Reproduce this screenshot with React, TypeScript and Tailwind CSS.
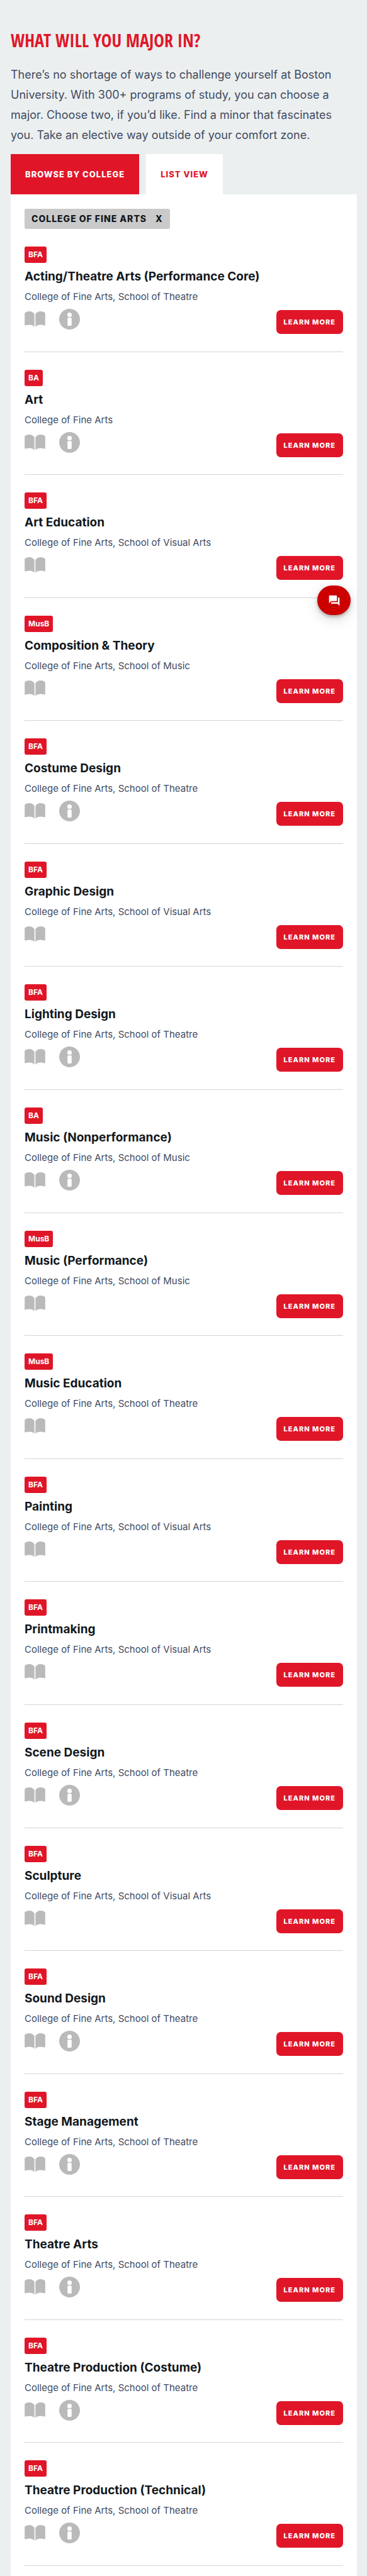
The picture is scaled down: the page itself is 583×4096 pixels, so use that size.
import { MdQuestionAnswer } from 'react-icons/md'

interface Program {
  degree: string
  name: string
  school: string
  info?: boolean
}

const programs: Program[] = [
  { degree: 'BFA', name: 'Acting/Theatre Arts (Performance Core)', school: 'College of Fine Arts, School of Theatre', info: true },
  { degree: 'BA', name: 'Art', school: 'College of Fine Arts', info: true },
  { degree: 'BFA', name: 'Art Education', school: 'College of Fine Arts, School of Visual Arts' },
  { degree: 'MusB', name: 'Composition & Theory', school: 'College of Fine Arts, School of Music' },
  { degree: 'BFA', name: 'Costume Design', school: 'College of Fine Arts, School of Theatre', info: true },
  { degree: 'BFA', name: 'Graphic Design', school: 'College of Fine Arts, School of Visual Arts' },
  { degree: 'BFA', name: 'Lighting Design', school: 'College of Fine Arts, School of Theatre', info: true },
  { degree: 'BA', name: 'Music (Nonperformance)', school: 'College of Fine Arts, School of Music', info: true },
  { degree: 'MusB', name: 'Music (Performance)', school: 'College of Fine Arts, School of Music' },
  { degree: 'MusB', name: 'Music Education', school: 'College of Fine Arts, School of Theatre' },
  { degree: 'BFA', name: 'Painting', school: 'College of Fine Arts, School of Visual Arts' },
  { degree: 'BFA', name: 'Printmaking', school: 'College of Fine Arts, School of Visual Arts' },
  { degree: 'BFA', name: 'Scene Design', school: 'College of Fine Arts, School of Theatre', info: true },
  { degree: 'BFA', name: 'Sculpture', school: 'College of Fine Arts, School of Visual Arts' },
  { degree: 'BFA', name: 'Sound Design', school: 'College of Fine Arts, School of Theatre', info: true },
  { degree: 'BFA', name: 'Stage Management', school: 'College of Fine Arts, School of Theatre', info: true },
  { degree: 'BFA', name: 'Theatre Arts', school: 'College of Fine Arts, School of Theatre', info: true },
  { degree: 'BFA', name: 'Theatre Production (Costume)', school: 'College of Fine Arts, School of Theatre', info: true },
  { degree: 'BFA', name: 'Theatre Production (Technical)', school: 'College of Fine Arts, School of Theatre', info: true },
]

function BookIcon() {
  return (
    <svg viewBox="0 0 60 46" className="w-[33px] h-[25px] fill-[#bababa]" aria-label="Major" role="img">
      <path d="M28.5 8C25 3 20 0 14 0 8.500 0 4 1.500 1 4Q0 5 0 6V40.500Q0 42 2 41.500C6 40 10 39.500 14 39.500 20 39.500 25 41.500 28.500 45.500Z" />
      <path d="M31.500 8C35 3 40 0 46 0 51.500 0 56 1.500 59 4Q60 5 60 6V40.500Q60 42 58 41.500C54 40 50 39.500 46 39.500 40 39.500 35 41.500 31.500 45.500Z" />
    </svg>
  )
}

function InfoIcon() {
  return (
    <svg viewBox="0 0 60 60" className="size-[33px]" aria-label="More information" role="img">
      <circle cx="30" cy="30" r="30" fill="#bababa" />
      <circle cx="30" cy="17.500" r="6.500" fill="#fff" />
      <rect x="24" y="26" width="12" height="23" rx="2" fill="#fff" />
    </svg>
  )
}

function ProgramRow({ program }: { program: Program }) {
  return (
    <li className="flex-1 border-b border-[#d5d5d5] pt-7">
      <span className="inline-flex items-center h-[26px] px-[6px] rounded-[3px] bg-[#e01628] text-white text-[12px] leading-4 font-bold align-top">
        {program.degree}
      </span>
      <h2 className="mt-[9px] text-[19px] leading-[26px] font-bold text-[#12181d]">{program.name}</h2>
      <p className="mt-2 text-[15px] leading-[22px] text-[#414b5f]">{program.school}</p>
      <div className="mt-2 flex items-start justify-between">
        <div className="flex items-center gap-[22px] h-[33px]">
          <BookIcon />
          {program.info && <InfoIcon />}
        </div>
        <a
          href="#"
          className="mt-[2px] flex items-center h-[38px] px-3 rounded-[7px] bg-[#e01628] text-white text-[11px] leading-4 font-extrabold tracking-[1px] uppercase"
        >
          Learn More
        </a>
      </div>
    </li>
  )
}

export default function App() {
  return (
    <main className="relative flex flex-col min-h-screen pl-[17px] pr-4 bg-[#ebeff0] font-['Inter',sans-serif]">
      <h1 className="mt-11 text-[28px] leading-10 font-extrabold uppercase text-[#e01628] font-['Noto_Sans_ExtraCondensed','Open_Sans_Condensed','Roboto_Condensed',sans-serif]">
        What will you major in?
      </h1>
      <p className="mt-[19px] text-[18px] leading-8 text-[#414b5f]">
        There’s no shortage of ways to challenge yourself at Boston University. With 300+ programs of study, you can
        choose a major. Choose two, if you’d like. Find a minor that fascinates you. Take an elective way outside of
        your comfort zone.
      </p>

      {/* View tabs */}
      <div className="mt-[14px] flex gap-[11px]" role="tablist">
        <button
          role="tab"
          aria-selected="true"
          className="h-16 px-[23px] bg-[#e01628] text-white text-[13px] leading-5 font-extrabold tracking-[1px] uppercase whitespace-nowrap"
        >
          Browse by College
        </button>
        <button
          role="tab"
          aria-selected="false"
          className="h-16 px-[23px] bg-white text-[#e01628] text-[13px] leading-5 font-extrabold tracking-[1px] uppercase whitespace-nowrap"
        >
          List View
        </button>
      </div>

      <section className="flex-1 flex flex-col px-[22px] pt-[23px] pb-4 bg-white">
        <button className="self-start flex items-center gap-[14px] h-8 px-[11px] rounded-[3px] bg-[#cacaca] text-[#12181d] text-[14px] leading-5 font-extrabold tracking-[1px] uppercase">
          <span>College of Fine Arts</span>
          <span>X</span>
        </button>

        <ul className="flex-1 flex flex-col">
          {programs.map((program) => (
            <ProgramRow key={program.name} program={program} />
          ))}
        </ul>
      </section>

      {/* Chat launcher */}
      <button
        aria-label="Open chat"
        className="absolute top-[931px] right-[26px] flex items-center justify-center w-[53px] h-[47px] rounded-[27px] bg-[#cc0000] text-white shadow-[0_3px_5px_rgba(0,0,0,0.25),0_6px_20px_rgba(0,0,0,0.15)]"
      >
        <MdQuestionAnswer className="size-5" />
      </button>
    </main>
  )
}
